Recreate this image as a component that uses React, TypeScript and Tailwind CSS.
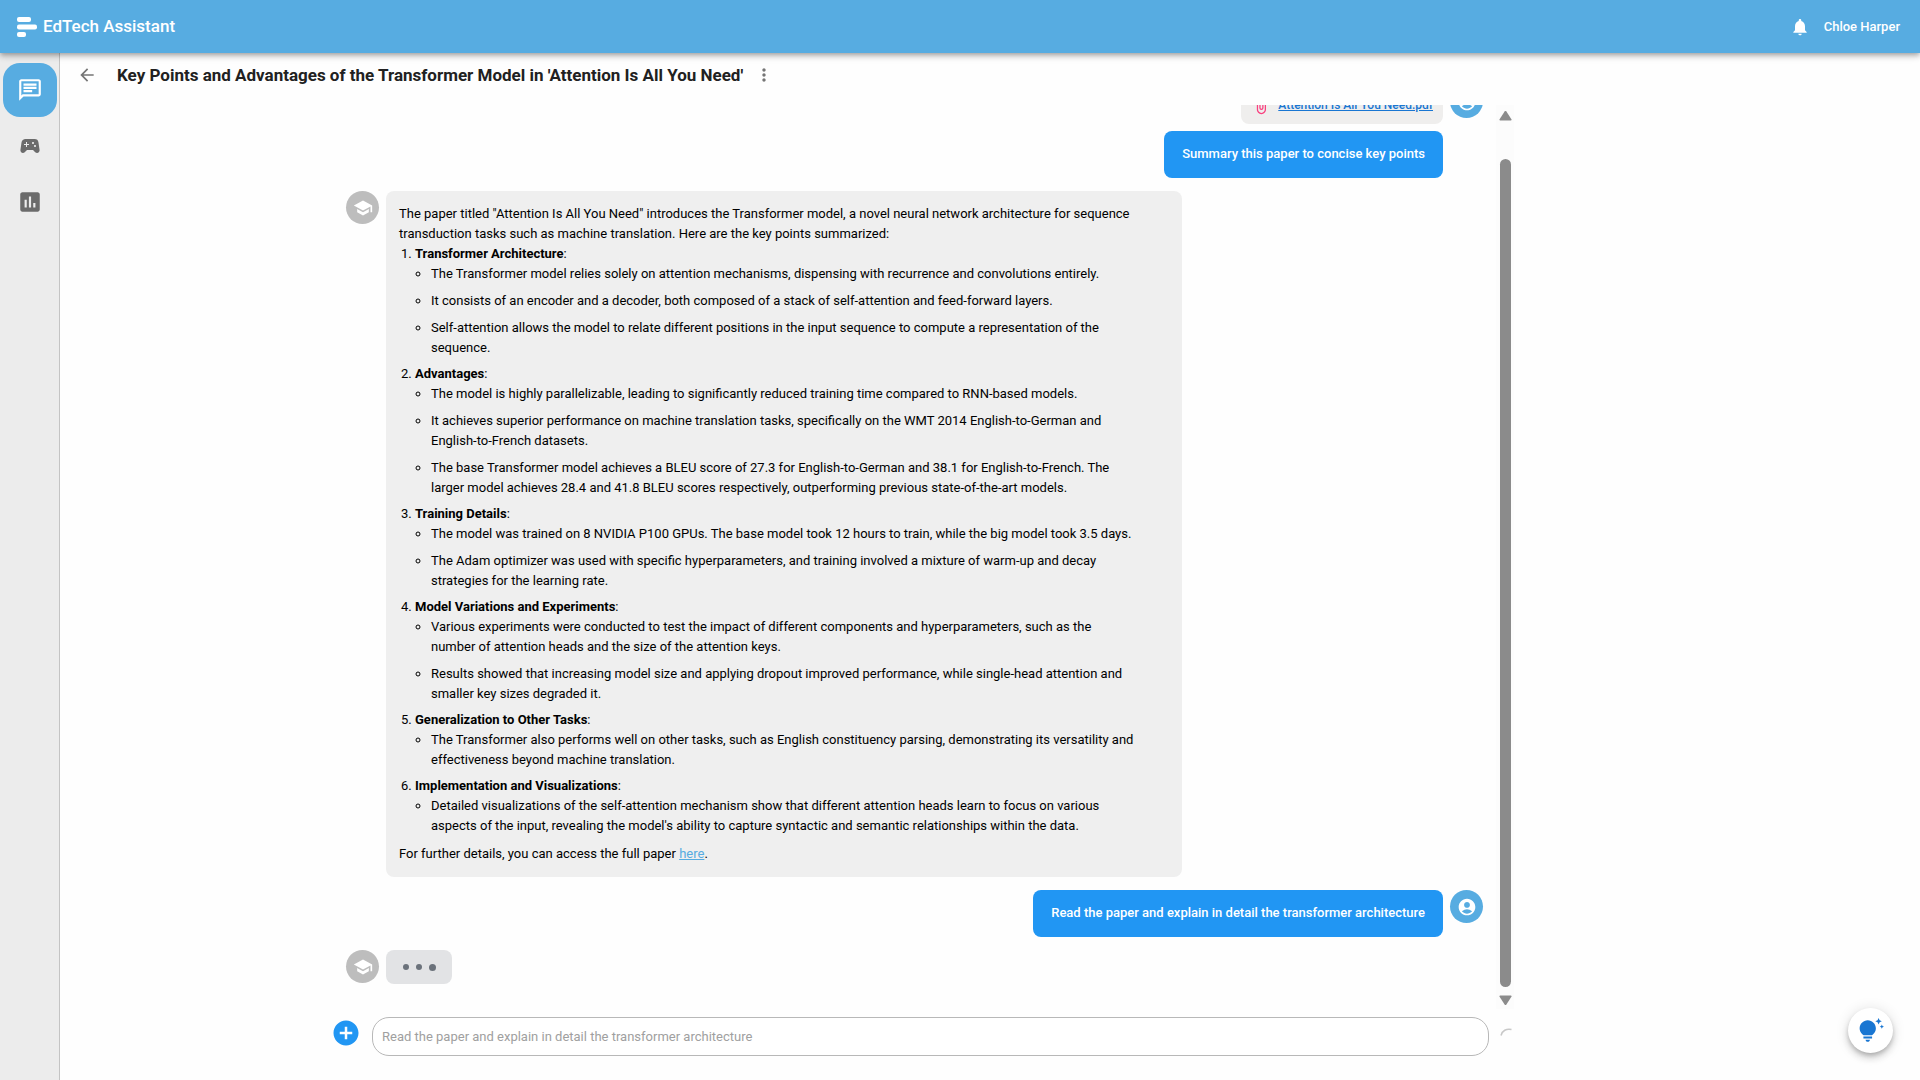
import React from "react";
import {
  MdAccountCircle,
  MdAddCircle,
  MdArrowBack,
  MdAssessment,
  MdAttachFile,
  MdMoreVert,
  MdNotifications,
  MdOutlineChat,
  MdSchool,
  MdSportsEsports,
  MdTipsAndUpdates,
} from "react-icons/md";

type Section = { title: string; points: string[] };

const sections: Section[] = [
  {
    title: "Transformer Architecture",
    points: [
      "The Transformer model relies solely on attention mechanisms, dispensing with recurrence and convolutions entirely.",
      "It consists of an encoder and a decoder, both composed of a stack of self-attention and feed-forward layers.",
      "Self-attention allows the model to relate different positions in the input sequence to compute a representation of the sequence.",
    ],
  },
  {
    title: "Advantages",
    points: [
      "The model is highly parallelizable, leading to significantly reduced training time compared to RNN-based models.",
      "It achieves superior performance on machine translation tasks, specifically on the WMT 2014 English-to-German and English-to-French datasets.",
      "The base Transformer model achieves a BLEU score of 27.3 for English-to-German and 38.1 for English-to-French. The larger model achieves 28.4 and 41.8 BLEU scores respectively, outperforming previous state-of-the-art models.",
    ],
  },
  {
    title: "Training Details",
    points: [
      "The model was trained on 8 NVIDIA P100 GPUs. The base model took 12 hours to train, while the big model took 3.5 days.",
      "The Adam optimizer was used with specific hyperparameters, and training involved a mixture of warm-up and decay strategies for the learning rate.",
    ],
  },
  {
    title: "Model Variations and Experiments",
    points: [
      "Various experiments were conducted to test the impact of different components and hyperparameters, such as the number of attention heads and the size of the attention keys.",
      "Results showed that increasing model size and applying dropout improved performance, while single-head attention and smaller key sizes degraded it.",
    ],
  },
  {
    title: "Generalization to Other Tasks",
    points: [
      "The Transformer also performs well on other tasks, such as English constituency parsing, demonstrating its versatility and effectiveness beyond machine translation.",
    ],
  },
  {
    title: "Implementation and Visualizations",
    points: [
      "Detailed visualizations of the self-attention mechanism show that different attention heads learn to focus on various aspects of the input, revealing the model's ability to capture syntactic and semantic relationships within the data.",
    ],
  },
];

function Logo() {
  return (
    <svg width="20" height="20" viewBox="0 0 20 20" fill="white" aria-hidden="true">
      <rect x="0" y="0" width="14" height="5" rx="2" />
      <rect x="0" y="7.5" width="20" height="5" rx="2" />
      <rect x="0" y="15" width="9" height="5" rx="2" />
    </svg>
  );
}

function Header() {
  return (
    <header className="z-10 flex h-[53px] shrink-0 items-center justify-between bg-[#57ace1] pr-5 pl-[17px] text-white shadow-[0_2px_4px_-1px_rgba(0,0,0,0.2),0_4px_5px_0_rgba(0,0,0,0.14),0_1px_10px_0_rgba(0,0,0,0.12)]">
      <div className="flex items-center gap-1.5">
        <Logo />
        <span className="text-[17px] font-medium">EdTech Assistant</span>
      </div>
      <div className="flex items-center gap-3.5">
        <button aria-label="Notifications">
          <MdNotifications size={20} />
        </button>
        <button className="text-[13px] font-medium">Chloe Harper</button>
      </div>
    </header>
  );
}

function Sidebar() {
  return (
    <nav className="flex w-[60px] shrink-0 flex-col items-center gap-0.5 border-r border-[#c4c4c4] bg-[#ececec] pt-2.5 pl-px text-[#6b6b6b]">
      <button aria-label="Chat" className="flex size-[54px] items-center justify-center rounded-[17px] bg-[#57ace1] text-white">
        <MdOutlineChat size={26} />
      </button>
      <button aria-label="Games" className="flex size-[54px] items-center justify-center">
        <MdSportsEsports size={24} />
      </button>
      <button aria-label="Reports" className="flex size-[54px] items-center justify-center">
        <MdAssessment size={26} />
      </button>
    </nav>
  );
}

function BotAvatar() {
  return (
    <span className="flex size-[33px] shrink-0 items-center justify-center rounded-full bg-[#bdbdbd] text-white">
      <MdSchool size={20} />
    </span>
  );
}

function UserAvatar() {
  return (
    <span className="flex size-[33px] shrink-0 items-center justify-center rounded-full bg-[#57ace1] text-white">
      <MdAccountCircle size={20} />
    </span>
  );
}

function UserBubble({ children }: { children: React.ReactNode }) {
  return (
    <p className="rounded-lg bg-[#2196f3] px-[18px] pt-[13px] pb-3.5 text-[13px] leading-5 font-medium text-white">
      {children}
    </p>
  );
}

function Answer() {
  return (
    <div className="w-[796px] rounded-lg bg-[#efefef] py-[13px] pr-[46px] pl-[13px] text-[13px] leading-5 text-black">
      <p>
        The paper titled "Attention Is All You Need" introduces the Transformer model, a novel neural network
        architecture for sequence transduction tasks such as machine translation. Here are the key points summarized:
      </p>
      <ol className="list-decimal pl-4">
        {sections.map((section) => (
          <li key={section.title} className="mb-1.5">
            <strong className="font-bold">{section.title}</strong>:
            <ul className="flex list-[circle] flex-col gap-[7px] pl-4">
              {section.points.map((point) => (
                <li key={point}>{point}</li>
              ))}
            </ul>
          </li>
        ))}
      </ol>
      <p className="pt-0.5">
        For further details, you can access the full paper{" "}
        <a href="#paper" className="text-[#57ace1] underline">
          here
        </a>
        .
      </p>
    </div>
  );
}

function Messages() {
  return (
    <div className="flex min-w-0 flex-1 flex-col justify-end overflow-hidden px-[13px] pb-[25px]">
      <div className="flex shrink-0 justify-end gap-[7px]">
        <div className="flex flex-col items-end gap-[7px]">
          <div className="flex h-[39px] items-center gap-[7px] rounded-lg bg-[#efeeed] px-2.5">
            <MdAttachFile size={20} className="text-[#f9407f]" />
            <a href="#attachment" className="text-xs font-medium text-[#1976d2] underline">
              Attention Is All You Need.pdf
            </a>
          </div>
          <UserBubble>Summary this paper to concise key points</UserBubble>
        </div>
        <UserAvatar />
      </div>
      <div className="mt-[13px] flex shrink-0 gap-[7px]">
        <BotAvatar />
        <Answer />
      </div>
      <div className="mt-[13px] flex shrink-0 justify-end gap-[7px]">
        <UserBubble>Read the paper and explain in detail the transformer architecture</UserBubble>
        <UserAvatar />
      </div>
      <div className="mt-[13px] flex shrink-0 gap-[7px]">
        <BotAvatar />
        <div className="flex h-[34px] w-[66px] items-center justify-center gap-[7px] rounded-lg bg-[#e2e3e5]">
          <span className="size-1.5 rounded-full bg-[#6b727b]" />
          <span className="size-1.5 rounded-full bg-[#6b727b]" />
          <span className="size-[7px] rounded-full bg-[#6b727b]" />
        </div>
      </div>
    </div>
  );
}

function Scrollbar() {
  return (
    <div className="flex w-[18px] shrink-0 flex-col items-center bg-[#fcfcfc] pt-1.5 pb-1">
      <svg width="13" height="10" viewBox="0 0 13 10" fill="#8b8b8b" aria-hidden="true">
        <path d="M5.6.6a1.1 1.1 0 0 1 1.8 0l5 7.6c.5.8.1 1.3-.7 1.3H1.3c-.8 0-1.2-.5-.7-1.3z" />
      </svg>
      <div className="mt-[38px] w-[11px] flex-1 rounded-full bg-[#8b8b8b]" />
      <svg width="13" height="10" viewBox="0 0 13 10" fill="#8b8b8b" className="mt-2" aria-hidden="true">
        <path d="M5.6 9.4a1.1 1.1 0 0 0 1.8 0l5-7.6c.5-.8.1-1.3-.7-1.3H1.3C.5.5.1 1 .6 1.8z" />
      </svg>
    </div>
  );
}

function Composer() {
  return (
    <form className="flex h-[71px] shrink-0 items-start pt-2">
      <button type="button" aria-label="Add attachment" className="mt-px -ml-0.5 text-[#2196f3]">
        <MdAddCircle size={30} />
      </button>
      <input
        aria-label="Message"
        placeholder="Read the paper and explain in detail the transformer architecture"
        className="ml-[11px] h-[39px] min-w-0 flex-1 rounded-[17px] border border-[#b8b8b8] bg-white px-[9px] text-[13px] placeholder:text-[#a0a0a0]"
      />
      <svg width="12" height="8" viewBox="0 0 12 8" className="mt-[11px] mr-0.5 ml-[11px]" fill="none" aria-hidden="true">
        <path d="M1 7.5C2 2.5 6.5.5 11.5 1.5" stroke="#c8c8c8" strokeWidth="1.5" />
      </svg>
    </form>
  );
}

export default function App() {
  return (
    <div className="flex h-screen flex-col overflow-hidden bg-[#fefefe] font-['Roboto',sans-serif]">
      <Header />
      <div className="flex min-h-0 flex-1">
        <Sidebar />
        <main className="flex min-w-0 flex-1 flex-col">
          <div className="flex h-[52px] shrink-0 items-start pt-2.5 pl-[17px] text-[#757575]">
            <button aria-label="Back" className="flex h-6 w-5 items-center">
              <MdArrowBack size={20} />
            </button>
            <h1 className="ml-5 text-[17px] leading-6 font-bold text-[#212121]">
              Key Points and Advantages of the Transformer Model in 'Attention Is All You Need'
            </h1>
            <button aria-label="More options" className="ml-[11px] flex h-6 items-center">
              <MdMoreVert size={20} />
            </button>
          </div>
          <div className="grid min-h-0 flex-1 grid-cols-[273fr_1181fr_406fr]">
            <section className="col-start-2 flex min-h-0 min-w-0 flex-col">
              <div className="flex min-h-0 flex-1">
                <Messages />
                <Scrollbar />
              </div>
              <Composer />
            </section>
          </div>
        </main>
      </div>
      <button
        aria-label="Tips"
        className="fixed right-[27px] bottom-[27px] flex size-[45px] items-center justify-center rounded-full bg-white text-[#1976d2] shadow-[0_3px_5px_-1px_rgba(0,0,0,0.2),0_5px_8px_0_rgba(0,0,0,0.14),0_1px_14px_0_rgba(0,0,0,0.12)]"
      >
        <MdTipsAndUpdates size={26} />
      </button>
    </div>
  );
}
